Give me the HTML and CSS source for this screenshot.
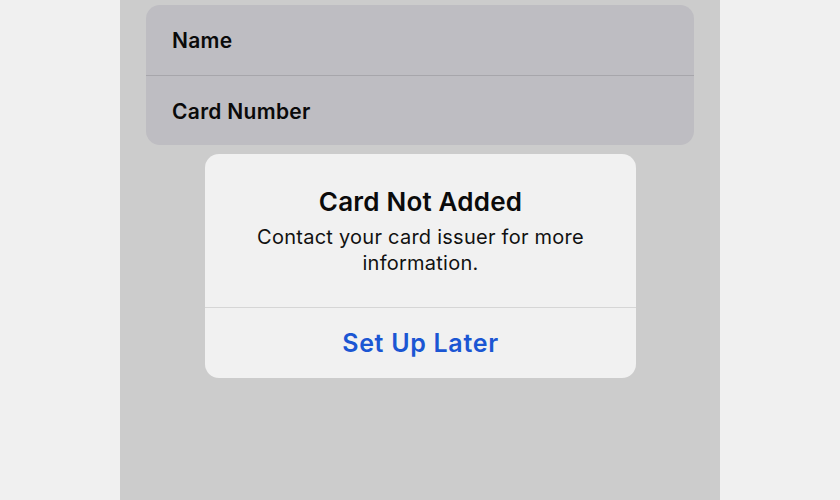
FILE: index.html
```html
<!DOCTYPE html>
<html lang="en">
  <head>
    <meta charset="UTF-8" />
    <title>Card Not Added</title>
    <link rel="stylesheet" href="styles.css">
  </head>
  <body>
    <div class="screen">
      <!-- Card form fields -->
      <div class="group">
        <div class="row">Name</div>
        <div class="row">Card Number</div>
      </div>

      <!-- Alert -->
      <div class="alert">
        <div class="alert-body">
          <div class="alert-title">Card Not Added</div>
          <div class="alert-msg">Contact your card issuer for more information.</div>
        </div>
        <div class="alert-btn">Set Up Later</div>
      </div>
    </div>
  </body>
</html>
```

FILE: styles.css
```css
body {
  margin: 0;
  background: #f0f0f0;
  font-family: Inter, "Noto Sans", sans-serif;
  display: flex;
  justify-content: center;
  height: 500px;
  overflow: hidden;
}

.screen {
  width: 600px;
  height: 500px;
  box-sizing: border-box;
  background: #cccccc;
  padding: 5px 26px 0;
}

.group {
  background: #bebdc2;
  border-radius: 14px;
  overflow: hidden;
}

.row {
  height: 70px;
  display: flex;
  align-items: center;
  padding-left: 26px;
  padding-top: 1px;
  font-size: 21px;
  font-weight: 600;
  letter-spacing: 0.3px;
  color: #0a0a0a;
  box-sizing: border-box;
}

.row + .row {
  border-top: 1px solid #a7a6ab;
}

.alert {
  width: 431px;
  margin: 9px 0 0 59px;
  background: #f1f1f1;
  border-radius: 14px;
  text-align: center;
  overflow: hidden;
}

.alert-body {
  padding: 33px 30px 31px;
  border-bottom: 1px solid #d6d6d6;
}

.alert-title {
  font-size: 26px;
  line-height: 30px;
  font-weight: 600;
  letter-spacing: 0.2px;
  color: #0b0b0b;
  margin-bottom: 7px;
}

.alert-msg {
  font-size: 20px;
  line-height: 26px;
  letter-spacing: 0.25px;
  color: #111;
}

.alert-btn {
  height: 70px;
  display: flex;
  align-items: center;
  justify-content: center;
  font-size: 25px;
  font-weight: 600;
  letter-spacing: 0.7px;
  color: #1b56d3;
}
```
